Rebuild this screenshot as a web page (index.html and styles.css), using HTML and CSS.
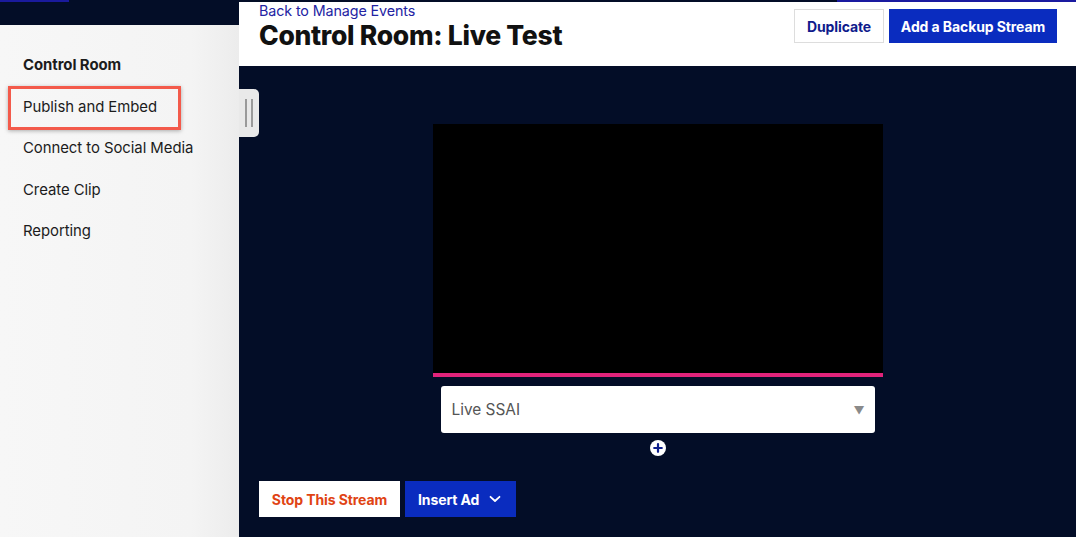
FILE: index.html
```html
<!DOCTYPE html>
<html lang="en">
<head>
<meta charset="utf-8">
<title>Control Room: Live Test</title>
<link rel="stylesheet" href="styles.css">
</head>
<body>
<div class="app">
  <aside class="sidebar">
    <div class="sidebar-top"><div class="sidebar-top-accent"></div></div>
    <nav class="sidebar-nav">
      <a class="nav-item nav-item-current">Control Room</a>
      <a class="nav-item nav-item-highlight">Publish and Embed</a>
      <a class="nav-item">Connect to Social Media</a>
      <a class="nav-item">Create Clip</a>
      <a class="nav-item">Reporting</a>
    </nav>
  </aside>
  <main class="main">
    <div class="main-strip"></div>
    <header class="header">
      <div class="header-titles">
        <a class="back-link">Back to Manage Events</a>
        <h1 class="title">Control Room: Live Test</h1>
      </div>
      <div class="header-actions">
        <button class="btn btn-outline">Duplicate</button>
        <button class="btn btn-primary">Add a Backup Stream</button>
      </div>
    </header>
    <section class="stage">
      <div class="handle"><span class="handle-line"></span><span class="handle-line"></span></div>
      <div class="player-col">
        <div class="video"></div>
        <div class="select">
          <span class="select-value">Live SSAI</span>
          <span class="select-arrow">&#9660;</span>
        </div>
        <div class="add-circle">
          <svg width="16" height="16" viewBox="0 0 16 16"><circle cx="8" cy="8" r="8" fill="#ffffff"/><path d="M8 4.2v7.6M4.2 8h7.6" stroke="#0d1e8c" stroke-width="2.2" stroke-linecap="round"/></svg>
        </div>
      </div>
      <div class="stage-actions">
        <button class="btn btn-stop">Stop This Stream</button>
        <button class="btn btn-primary btn-insert">Insert Ad
          <svg class="chev" width="12" height="8" viewBox="0 0 12 8"><path d="M1.5 1.8l4.5 4.2 4.5-4.2" fill="none" stroke="#ffffff" stroke-width="1.8" stroke-linecap="round" stroke-linejoin="round"/></svg>
        </button>
      </div>
    </section>
  </main>
</div>
</body>
</html>
```
FILE: styles.css
```css
* { box-sizing: border-box; }
html, body { margin: 0; padding: 0; }
body {
  font-family: "Inter", "Liberation Sans", sans-serif;
  color: #1a1a1a;
  width: 1076px;
  height: 537px;
  overflow: hidden;
  background: #030d27;
}
.app { display: flex; height: 537px; }

.sidebar { width: 239px; display: flex; flex-direction: column; flex-shrink: 0; }
.sidebar-top { height: 25px; background: #030d27; }
.sidebar-top-accent { width: 69px; height: 2px; background: #1a1a9c; }
.sidebar-nav {
  flex: 1;
  background: linear-gradient(to right, #f7f7f7 0%, #f4f4f4 80%, #ececec 100%);
  padding-top: 20px;
  display: flex;
  flex-direction: column;
}
.nav-item {
  position: relative;
  height: 41.5px;
  line-height: 41.5px;
  padding-left: 23px;
  font-size: 14.9px;
  color: #1c1c1c;
  letter-spacing: -0.05px;
}
.nav-item-current { font-weight: 700; }
.nav-item-highlight::after {
  content: "";
  box-sizing: border-box;
  position: absolute;
  left: 8px;
  top: -1px;
  width: 173px;
  height: 44px;
  border: 3px solid #f35a4b;
  box-shadow: 0 1px 4px rgba(0,0,0,0.3);
}

.main { flex: 1; display: flex; flex-direction: column; }
.main-strip { height: 2px; background: linear-gradient(to right, #030d27 598px, #1a1aa0 598px); }
.header {
  height: 64px;
  background: #ffffff;
  display: flex;
  justify-content: space-between;
  padding: 0 19px 0 20px;
}
.header-titles { display: flex; flex-direction: column; }
.back-link {
  font-size: 14.3px;
  line-height: 17px;
  color: #2323a3;
  letter-spacing: -0.1px;
}
.title {
  margin: 0;
  font-size: 26.5px;
  line-height: 32px;
  font-weight: 800;
  color: #111111;
  letter-spacing: -0.3px;
}
.header-actions { display: flex; gap: 5px; padding-top: 7px; }
.btn {
  font-family: inherit;
  font-size: 14px;
  font-weight: 700;
  letter-spacing: -0.1px;
  height: 34px;
  border: none;
  padding: 0 12px;
  cursor: pointer;
}
.btn-outline {
  background: #ffffff;
  border: 1px solid #dddddd;
  color: #0f1b8c;
  width: 90px;
  padding: 0;
}
.btn-primary {
  background: #0a2cbf;
  color: #ffffff;
  width: 168px;
  padding: 0;
}

.stage {
  flex: 1;
  position: relative;
  background: #030d27;
  display: flex;
  flex-direction: column;
}
.handle {
  position: absolute;
  left: 0;
  top: 23px;
  width: 20px;
  height: 48px;
  background: #e9e9e9;
  border-radius: 0 5px 5px 0;
  display: flex;
  gap: 4px;
  padding-left: 6px;
  padding-top: 10px;
}
.handle-line { width: 2px; height: 28px; background: #9a9a9a; }

.player-col {
  display: flex;
  flex-direction: column;
  align-items: center;
  padding-top: 58px;
}
.video {
  width: 450px;
  height: 253px;
  background: #000000;
  border-bottom: 4px solid #e1237b;
}
.select {
  margin-top: 9px;
  width: 434px;
  height: 47px;
  background: #ffffff;
  border-radius: 3px;
  display: flex;
  align-items: center;
  justify-content: space-between;
  padding: 0 10px 0 11px;
}
.select-value { font-size: 15.4px; color: #555555; }
.select-arrow { font-size: 11px; color: #8a8a8a; }
.add-circle { margin-top: 7px; height: 16px; display: flex; }

.stage-actions {
  display: flex;
  gap: 5px;
  padding-left: 20px;
  margin-top: 25px;
}
.btn-stop {
  background: #ffffff;
  color: #e04313;
  width: 141px;
  height: 36px;
  padding: 0;
}
.btn-insert {
  width: 111px;
  height: 36px;
  display: flex;
  align-items: center;
  justify-content: flex-start;
  padding-left: 13px;
  gap: 10px;
}
.chev { display: block; }
```
